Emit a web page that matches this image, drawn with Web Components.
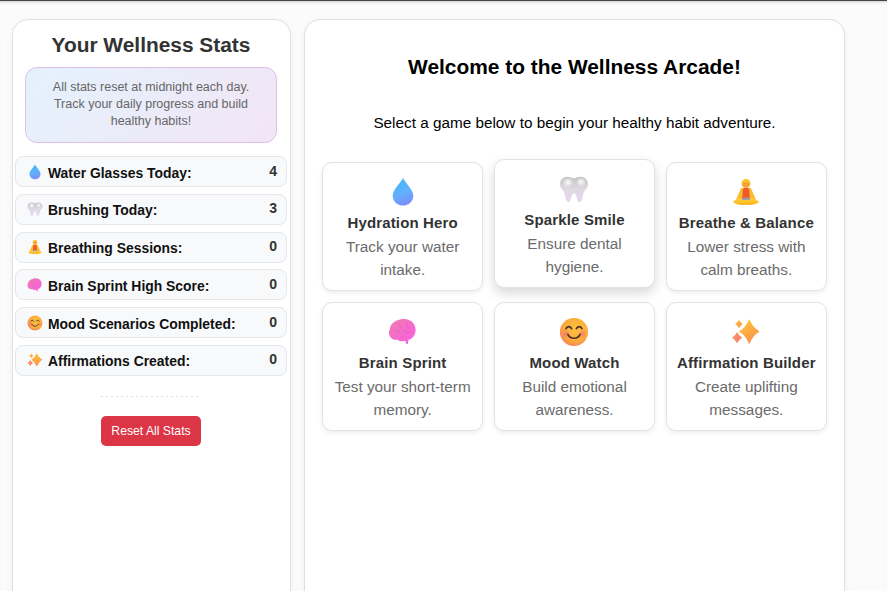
<!DOCTYPE html>
<html lang="en">
<head>
<meta charset="utf-8">
<title>Wellness Arcade</title>
<style>
	html, body {
		margin: 0;
		height: 100%;
		overflow: hidden;
		background: #fbfbfb;
		font-family: "Liberation Sans", Arial, sans-serif;
	}
</style>
</head>
<body>
<template id="icon-defs">
	<svg viewBox="0 0 32 32" data-name="drop">
		<defs><linearGradient id="g" x1="0.3" y1="0" x2="0.6" y2="1"><stop offset="0" stop-color="#3fb8f8"/><stop offset="0.55" stop-color="#62b0fc"/><stop offset="1" stop-color="#7d8cfb"/></linearGradient></defs>
		<path d="M16 1C14 6 5 13 5 20c0 6 5 10.500 11 10.500S27 26 27 20C27 13 18 6 16 1Z" fill="url(#g)"/>
	</svg>
	<svg viewBox="0 0 32 32" data-name="tooth">
		<defs>
			<linearGradient id="t" x1="0" y1="0" x2="0" y2="1"><stop offset="0" stop-color="#c4c2c4"/><stop offset="0.5" stop-color="#dedae2"/><stop offset="1" stop-color="#e6d4f4"/></linearGradient>
			<radialGradient id="h" cx="0.55" cy="0.45" r="0.5"><stop offset="0" stop-color="#fdfdfd"/><stop offset="1" stop-color="#fdfdfd" stop-opacity="0"/></radialGradient>
		</defs>
		<path d="M9 3C4.500 3 1 6.500 1 11c0 4 3.200 6 4.500 8.500 1.300 2.800 1.500 10.500 4.800 10.500 3 0 2.200-9.500 5.700-9.500s2.700 9.500 5.700 9.500c3.300 0 3.500-7.700 4.800-10.500C27.800 17 31 15 31 11c0-4.500-3.500-8-8-8-3 0-5 1.500-7 1.500S12 3 9 3Z" fill="url(#t)"/>
		<ellipse cx="9" cy="9.500" rx="6" ry="5.500" fill="url(#h)"/>
		<ellipse cx="23" cy="9" rx="5.500" ry="5" fill="url(#h)"/>
	</svg>
	<svg viewBox="0 0 32 32" data-name="meditate">
		<defs><linearGradient id="l" x1="0" y1="0" x2="0" y2="1"><stop offset="0" stop-color="#ffd23c"/><stop offset="1" stop-color="#fcb018"/></linearGradient></defs>
		<path d="M12 11.500h8c1 0 1.500 .5 2 2L27 25H5l5-11.500c.5-1.500 1-2 2-2Z" fill="#fbbd2e"/>
		<path d="M2 26.500C6 23 11 22.500 16 24.500c5-2 10-1.500 14 2-3 3-8 4-14 3-6 1-11 0-14-3Z" fill="url(#l)"/>
		<path d="M12.500 14c0-1.500 1-2.500 3.500-2.500s3.500 1 3.500 2.500l.5 8.500h-8Z" fill="#ee5a2b"/>
		<rect x="11.500" y="22" width="9" height="2.600" rx="1" fill="#a09ba6"/>
		<circle cx="16" cy="7" r="4.600" fill="#f6a62e"/>
		<path d="M11.500 6.500c.3-3 2.300-4.500 4.500-4.500s4.200 1.500 4.500 4.500c-2-1.300-7-1.300-9 0Z" fill="#fbc531"/>
	</svg>
	<svg viewBox="0 0 32 32" data-name="brain">
		<defs><linearGradient id="b" x1="0" y1="0" x2="1" y2="1"><stop offset="0" stop-color="#ef7fb0"/><stop offset="0.6" stop-color="#f668cf"/><stop offset="1" stop-color="#fa60ea"/></linearGradient></defs>
		<g transform="translate(0 -1.500) scale(1 1.070)">
			<path d="M13 4c6-1.500 13 .5 15.500 6 1.800 4.200 1 8.500-2 11.500-1.800 1.600-3.500 2-4.500 2.500-.7 .6-.2 2.500-.8 4-.6 .8-1.700 .3-2-.5l-.7-2.300c-3.500 1-6 .2-8.500-1.200-3 .5-6.500-.7-8-3.500C.500 18 .800 15.500 2 13.500 2.500 8.500 7 5 13 4Z" fill="url(#b)"/>
			<path d="M10 8c3 0 4 2 3.500 4.500M20 6.500c-1 3 .500 5 3 5.500M7 15.500c3-1 5 0 6.500 2.500M17 14.500c2 2.500 5 3 8 1.500M14 22.500c1-1.500 3-2.500 5-2" fill="none" stroke="#d84aa8" stroke-width="1" stroke-linecap="round" opacity="0.3"/>
		</g>
	</svg>
	<svg viewBox="0 0 32 32" data-name="smile">
		<defs>
			<radialGradient id="f" cx="0.58" cy="0.38" r="0.68"><stop offset="0" stop-color="#fdc23d"/><stop offset="0.65" stop-color="#fbab3c"/><stop offset="1" stop-color="#f57f5b"/></radialGradient>
			<radialGradient id="c" cx="0.5" cy="0.5" r="0.5"><stop offset="0" stop-color="#f4677c" stop-opacity="0.7"/><stop offset="1" stop-color="#f4677c" stop-opacity="0"/></radialGradient>
		</defs>
		<circle cx="16" cy="16" r="15" fill="url(#f)"/>
		<circle cx="7" cy="18" r="5" fill="url(#c)"/>
		<circle cx="25" cy="18" r="5" fill="url(#c)"/>
		<path d="M7.500 12.500c1-3 5-3 6 0M18.500 12.500c1-3 5-3 6 0M9.500 18.500c2.500 5.500 10.500 5.500 13 0" fill="none" stroke="#4a2f2a" stroke-width="1.700" stroke-linecap="round"/>
	</svg>
	<svg viewBox="0 0 32 32" data-name="sparkles">
		<defs>
			<linearGradient id="s" x1="0.2" y1="0" x2="0.7" y2="1"><stop offset="0" stop-color="#ffc83a"/><stop offset="1" stop-color="#fb8d4e"/></linearGradient>
			<linearGradient id="s2" x1="0" y1="0" x2="1" y2="1"><stop offset="0" stop-color="#fb9d5c"/><stop offset="1" stop-color="#f77a74"/></linearGradient>
		</defs>
		<path d="M19.500 2.500Q23.500 11.500 30.500 15.500 23.500 19.500 19.500 29 15.500 19.500 8.500 15.500 15.500 11.500 19.500 2.500Z" fill="url(#s)"/>
		<path d="M8.500 3Q10 6 12.500 7.500 10 9 8.500 12 7 9 4.500 7.500 7 6 8.500 3Z" fill="url(#s)"/>
		<path d="M6.500 16Q8.300 20 12 22 8.300 24 6.500 28 4.700 24 1 22 4.700 20 6.500 16Z" fill="url(#s2)"/>
	</svg>
</template>

<wellness-page>
	<stats-panel slot="side" heading="Your Wellness Stats" note="All stats reset at midnight each day. Track your daily progress and build healthy habits!">
		<stat-row icon="drop" value="4">Water Glasses Today:</stat-row>
		<stat-row icon="tooth" value="3">Brushing Today:</stat-row>
		<stat-row icon="meditate" value="0">Breathing Sessions:</stat-row>
		<stat-row icon="brain" value="0">Brain Sprint High Score:</stat-row>
		<stat-row icon="smile" value="0">Mood Scenarios Completed:</stat-row>
		<stat-row icon="sparkles" value="0">Affirmations Created:</stat-row>
	</stats-panel>
	<arcade-panel heading="Welcome to the Wellness Arcade!" intro="Select a game below to begin your healthy habit adventure.">
		<game-card icon="drop" title="Hydration Hero">Track your water intake.</game-card>
		<game-card icon="tooth" title="Sparkle Smile" raised>Ensure dental hygiene.</game-card>
		<game-card icon="meditate" title="Breathe &amp; Balance">Lower stress with calm breaths.</game-card>
		<game-card icon="brain" title="Brain Sprint">Test your short-term memory.</game-card>
		<game-card icon="smile" title="Mood Watch">Build emotional awareness.</game-card>
		<game-card icon="sparkles" title="Affirmation Builder">Create uplifting messages.</game-card>
	</arcade-panel>
</wellness-page>

<script>
/**
 * Draws one of the icons from #icon-defs.
 * @attribute "name":String  Icon name
 * @attribute "size":Number  Width and height in px
 */
class WellIcon extends HTMLElement {
	connectedCallback() {
		const size = this.getAttribute('size') || 16;
		const shadow = this.attachShadow({mode: 'open'});
		shadow.innerHTML = `<style>
			:host { display: block; width: ${size}px; height: ${size}px; flex: none; }
			svg { display: block; width: 100%; height: 100%; }
		</style>`;
		const defs = document.querySelector('#icon-defs').content;
		const svg = defs.querySelector(`svg[data-name="${this.getAttribute('name')}"]`);
		shadow.append(svg.cloneNode(true));
	}
}

class WellnessPage extends HTMLElement {
	constructor() {
		super();
		this.attachShadow({mode: 'open'}).innerHTML = `
			<style>
			:host {
				display: block;
				height: 100vh;
				box-sizing: border-box;
				border-top: 1px solid #444;
				box-shadow: inset 0 3px 3px -2px #ccc;
				overflow: hidden;
			}
			#layout {
				display: flex;
				gap: 13px;
				padding: 18px 0 0 12px;
			}
			</style>
			<div id="layout">
				<slot name="side"></slot>
				<slot></slot>
			</div>
		`;
	}
}

class StatsPanel extends HTMLElement {
	constructor() {
		super();
		this.attachShadow({mode: 'open'}).innerHTML = `
			<style>
			:host {
				display: block;
				box-sizing: border-box;
				width: 279px;
				height: 640px;
				padding: 13px 3px 13px 2px;
				background: #fff;
				border: 1px solid #e0e0e0;
				border-radius: 16px;
				box-shadow: 0 2px 6px rgba(0, 0, 0, .05);
			}
			h2 {
				margin: 0 0 10px;
				font-size: 20.900px;
				line-height: 24px;
				font-weight: bold;
				text-align: center;
				color: #333;
			}
			#note {
				margin: 0 10px 13px;
				padding: 11px 16px;
				height: 76px;
				box-sizing: border-box;
				background: linear-gradient(135deg, #e3f2fd, #f3e5f5);
				border: 1px solid #e1bee7;
				border-radius: 12px;
				font-size: 12.500px;
				line-height: 17px;
				text-align: center;
				color: #666;
			}
			#rows {
				display: flex;
				flex-direction: column;
				gap: 6.800px;
			}
			#divider {
				width: 100px;
				height: 1px;
				margin: 20px auto 19px;
				background: repeating-linear-gradient(90deg, #dcdcdc 0 2px, transparent 2px 5px);
			}
			#reset {
				display: block;
				width: 100px;
				height: 30px;
				margin: 0 auto;
				padding: 0;
				background: #dc3545;
				color: #fff;
				border: 0;
				border-radius: 5px;
				font: 12.200px "Liberation Sans", Arial, sans-serif;
			}
			</style>
			<h2></h2>
			<div id="note"></div>
			<div id="rows"><slot></slot></div>
			<div id="divider"></div>
			<button id="reset" type="button">Reset All Stats</button>
		`;
	}

	connectedCallback() {
		this.shadowRoot.querySelector('h2').textContent = this.getAttribute('heading');
		this.shadowRoot.querySelector('#note').textContent = this.getAttribute('note');
	}
}

class StatRow extends HTMLElement {
	constructor() {
		super();
		this.attachShadow({mode: 'open'}).innerHTML = `
			<style>
			:host {
				display: flex;
				align-items: center;
				box-sizing: border-box;
				height: 31px;
				padding: 2px 9px 0 11px;
				background: #f8f9fa;
				border: 1px solid #e4e6e9;
				border-radius: 8px;
				font-size: 13.900px;
				font-weight: bold;
				color: #111;
			}
			#icon { margin-right: 5px; margin-top: -2px; }
			#label { flex: 1; }
			#value { color: #333; margin-top: -4px; font-size: 14px; }
			</style>
			<div id="icon"></div>
			<span id="label"><slot></slot></span>
			<span id="value"></span>
		`;
	}

	connectedCallback() {
		const icon = document.createElement('well-icon');
		icon.setAttribute('name', this.getAttribute('icon'));
		icon.setAttribute('size', 16);
		this.shadowRoot.querySelector('#icon').append(icon);
		this.shadowRoot.querySelector('#value').textContent = this.getAttribute('value');
	}
}

class ArcadePanel extends HTMLElement {
	constructor() {
		super();
		this.attachShadow({mode: 'open'}).innerHTML = `
			<style>
			:host {
				display: block;
				box-sizing: border-box;
				width: 541px;
				height: 640px;
				padding: 35px 17px 0 17px;
				background: #fff;
				border: 1px solid #e0e0e0;
				border-radius: 16px;
				box-shadow: 0 2px 6px rgba(0, 0, 0, .05);
			}
			h1 {
				margin: 0 0 35px;
				font-size: 20.900px;
				line-height: 24px;
				font-weight: bold;
				text-align: center;
				color: #000;
			}
			p {
				margin: 0 0 30px;
				font-size: 15.300px;
				line-height: 18px;
				text-align: center;
				color: #000;
			}
			#games {
				display: grid;
				grid-template-columns: repeat(3, 1fr);
				gap: 11px 10.500px;
			}
			</style>
			<h1></h1>
			<p></p>
			<div id="games"><slot></slot></div>
		`;
	}

	connectedCallback() {
		this.shadowRoot.querySelector('h1').textContent = this.getAttribute('heading');
		this.shadowRoot.querySelector('p').textContent = this.getAttribute('intro');
	}
}

/**
 * @attribute "raised"  Shows the card in its hover state
 */
class GameCard extends HTMLElement {
	constructor() {
		super();
		this.attachShadow({mode: 'open'}).innerHTML = `
			<style>
			:host {
				display: flex;
				flex-direction: column;
				align-items: center;
				box-sizing: border-box;
				height: 129px;
				padding: 14px 10px 0;
				background: #fff;
				border: 1px solid #e3e3e3;
				border-radius: 10px;
				box-shadow: 0 2px 5px rgba(0, 0, 0, .07);
				text-align: center;
			}
			:host([raised]) {
				transform: translateY(-3px);
				box-shadow: 0 5px 12px rgba(0, 0, 0, .16);
			}
			h3 {
				margin: 6px 0 3px;
				font-size: 15px;
				line-height: 19px;
				font-weight: bold;
				letter-spacing: .15px;
				color: #333;
				white-space: nowrap;
			}
			#desc {
				font-size: 15.300px;
				line-height: 23px;
				color: #6b6b6b;
			}
			</style>
			<div id="icon"></div>
			<h3></h3>
			<div id="desc"><slot></slot></div>
		`;
	}

	connectedCallback() {
		const icon = document.createElement('well-icon');
		icon.setAttribute('name', this.getAttribute('icon'));
		icon.setAttribute('size', 30);
		this.shadowRoot.querySelector('#icon').append(icon);
		this.shadowRoot.querySelector('h3').textContent = this.getAttribute('title');
	}
}

customElements.define('well-icon', WellIcon);
customElements.define('wellness-page', WellnessPage);
customElements.define('stats-panel', StatsPanel);
customElements.define('stat-row', StatRow);
customElements.define('arcade-panel', ArcadePanel);
customElements.define('game-card', GameCard);
</script>
</body>
</html>
